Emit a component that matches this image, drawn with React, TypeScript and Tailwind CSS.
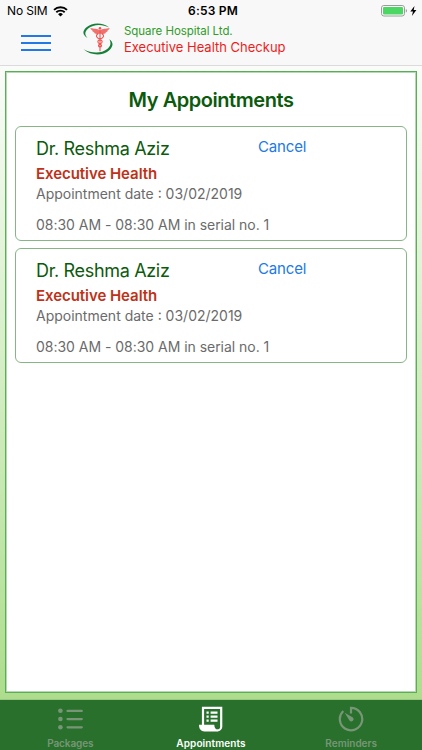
interface Appointment {
  id: number;
  doctor: string;
  department: string;
  date: string;
  time: string;
  serial: number;
}

const appointments: Appointment[] = [
  {
    id: 1,
    doctor: "Dr. Reshma Aziz",
    department: "Executive Health",
    date: "03/02/2019",
    time: "08:30 AM - 08:30 AM",
    serial: 1,
  },
  {
    id: 2,
    doctor: "Dr. Reshma Aziz",
    department: "Executive Health",
    date: "03/02/2019",
    time: "08:30 AM - 08:30 AM",
    serial: 1,
  },
];

function WifiIcon() {
  return (
    <svg width="15" height="11" viewBox="0 0 15 11" fill="none" stroke="#000" strokeWidth="1.9">
      <path d="M1 3.900a9.400 9.400 0 0 1 13 0" />
      <path d="M3.300 6.300a6.100 6.100 0 0 1 8.400 0" />
      <path d="M7.500 10.600 5.100 8.200a3.400 3.400 0 0 1 4.800 0z" fill="#000" stroke="none" />
    </svg>
  );
}

function BatteryIcon() {
  return (
    <svg width="36" height="12" viewBox="0 0 36 12">
      <rect x="0.5" y="0.5" width="23" height="10.5" rx="2.4" fill="#fff" stroke="#9b9b9b" />
      <rect x="2" y="2" width="20" height="7.5" rx="1" fill="#4cd663" />
      <path d="M24.800 4v3.600c.8-.3 1.200-1 1.200-1.800s-.4-1.500-1.200-1.800z" fill="#9b9b9b" />
      <path d="M33.500 1 29.300 6.600H32L30.900 11l4.500-5.900h-2.700z" fill="#000" />
    </svg>
  );
}

function Logo() {
  return (
    <svg width="32" height="34" viewBox="0 0 32 34">
      <path d="M26.300 5.500C20 0 9 .2 3.500 5.200-.8 9-.8 13 4.500 16 1.200 12.500 1.800 9.400 5.200 6.400 10.300 2.200 19 1.700 26.300 5.500z" fill="#16803a" />
      <path d="M.5 27.300c7.500 6.700 19.500 6.600 25.500 1.200 4.800-4.300 4.500-8.500.2-11.300 2.300 3.700 1.500 6.900-2 9.800-5.700 4.700-15.200 4.700-23.700.3z" fill="#16803a" />
      <path d="M17 8.500c-3-2.300-5.700-1.300-9.700-2.400.5 1.500 1.600 2.200 2.900 2.500-.6.100-1 .1-1.400 0 .8 1.200 1.900 1.700 3.100 1.900-.5.200-.8.200-1.200.1.900 1.200 2.700 1.700 5.400 1.100h1.800c2.700.6 4.500.1 5.400-1.100-.4.100-.7.100-1.200-.1 1.200-.2 2.300-.7 3.100-1.900-.4.100-.8.100-1.400 0 1.300-.3 2.400-1 2.900-2.500-4 1.100-6.700.1-9.700 2.400z" fill="#f0706c" />
      <circle cx="17" cy="6.200" r="1.300" fill="#ee5450" />
      <path d="M17 7.500v21.700M15.200 11.500c-2.900 1.800-2.400 4.200 1.800 5.800 2.900 1.300 2.900 3.500 0 4.600-2.200.9-2.100 2.700.3 3.600M18.800 11.500c2.900 1.800 2.400 4.200-1.800 5.800-2.900 1.300-2.900 3.500 0 4.600 2.200.9 2.100 2.700-.3 3.600" fill="none" stroke="#ee5450" strokeWidth="1.100" />
    </svg>
  );
}

function ListIcon() {
  return (
    <svg width="26" height="22" viewBox="0 0 26 22" fill="currentColor">
      <circle cx="3.400" cy="2.800" r="2.300" />
      <circle cx="3.400" cy="11" r="2.300" />
      <circle cx="3.400" cy="19.200" r="2.300" />
      <path d="M10.500 2.900h14.300M10.500 11.100h14.300M10.500 19.300h14.300" stroke="currentColor" strokeWidth="2.200" strokeLinecap="round" />
    </svg>
  );
}

function ScrollIcon() {
  return (
    <svg width="26" height="26" viewBox="0 0 26 26" fill="none" stroke="currentColor">
      <path d="M5 19V1.800h18.200V20.700a3.800 3.800 0 0 1-3.800 3.700" strokeWidth="2.200" />
      <path d="M1 18.800h15.300c0 3.300 1.300 4.600 3.500 4.700v1.900H6.500c-3.700 0-5.500-2.500-5.500-6.600z" fill="currentColor" stroke="none" />
      <path d="M8.500 6.700h2.200M8.500 10.700h2.200M8.500 14.700h2.200M12.600 6.700h6.900M12.600 10.700h6.900M12.600 14.700h6.900" strokeWidth="2.200" />
    </svg>
  );
}

function TimerIcon() {
  return (
    <svg width="26" height="26" viewBox="0 0 26 26" fill="none" stroke="currentColor">
      <path d="M5.300 5A11.200 11.200 0 1 0 13 1.900v5.600" strokeWidth="2.200" />
      <path d="M6.700 6.700 14.900 11.400a2.300 2.300 0 1 1-3.300 3.300z" fill="currentColor" stroke="none" />
    </svg>
  );
}

function AppointmentCard({ appointment }: { appointment: Appointment }) {
  return (
    <div className="h-[115px] rounded-md border border-[#86b586] pl-5 pt-[9px] text-sm text-[#6b6b6b]">
      <div className="flex">
        <h2 className="w-[222px] pt-px text-lg leading-6 tracking-[-0.33px] text-[#0c5a0c]">
          {appointment.doctor}
        </h2>
        <button className="mt-px h-5 text-[15px] leading-5 tracking-[-0.15px] text-[#2279e6]">Cancel</button>
      </div>
      <p className="mt-[3px] text-[15px] font-semibold leading-5 tracking-[-0.05px] text-[#bd3218]">
        {appointment.department}
      </p>
      <p className="leading-5">Appointment date : {appointment.date}</p>
      <p className="mt-[11px] leading-5 tracking-[-0.03px]">
        {appointment.time} in serial no. {appointment.serial}
      </p>
    </div>
  );
}

export default function App() {
  return (
    <div className="flex h-[750px] w-[422px] flex-col overflow-hidden bg-[#f8f8f8] font-['Inter',sans-serif]">
      <header className="h-[66px] border-b border-[#dcdadb]">
        <div className="grid h-[22px] grid-cols-3 items-center pl-[7px] pr-[5px] text-black">
          <div className="flex items-center gap-[6px] text-[12px]">
            <span className="tracking-[-0.15px]">No SIM</span>
            <WifiIcon />
          </div>
          <span className="pl-[2px] text-center text-[12px] font-semibold tracking-[0.2px]">6:53 PM</span>
          <div className="flex justify-end">
            <BatteryIcon />
          </div>
        </div>
        <div className="flex pl-[21px]">
          <button className="mt-[13px] flex h-4 w-[30px] flex-col justify-between">
            <span className="h-[2px] w-full bg-[#2279e6]" />
            <span className="h-[2px] w-full bg-[#2279e6]" />
            <span className="h-[2px] w-full bg-[#2279e6]" />
          </button>
          <div className="ml-8">
            <Logo />
          </div>
          <div className="ml-[9px] mt-[1px]">
            <p className="text-[11.5px] leading-4 tracking-[-0.05px] text-[#319b2b]">Square Hospital Ltd.</p>
            <p className="text-[13px] leading-4 text-[#ee1d1d]">Executive Health Checkup</p>
          </div>
        </div>
      </header>

      <main className="flex-1 border-b border-[#9cc886] bg-gradient-to-b from-[#fafcf9] to-[#addd8c] px-[5px] pt-[5px]">
        <section className="h-[622px] border border-[#5dac5a] bg-white px-[9px] shadow-[inset_0_0_0_1px_#b4dab1]">
          <h1 className="mb-3 mt-[14px] text-center text-xl font-semibold leading-7 tracking-[-0.45px] text-[#0c5a0c]">
            My Appointments
          </h1>
          <div className="flex flex-col gap-[7px]">
            {appointments.map((appointment) => (
              <AppointmentCard key={appointment.id} appointment={appointment} />
            ))}
          </div>
        </section>
      </main>

      <nav className="grid h-[50px] grid-cols-3 bg-[#28702c] pt-[6px] text-[10px] font-semibold text-[#789677]">
        <div className="flex flex-col items-center">
          <div className="flex h-[26px] items-center">
            <ListIcon />
          </div>
          <span className="mt-1 leading-[14px] tracking-[-0.1px]">Packages</span>
        </div>
        <div className="flex flex-col items-center text-white">
          <ScrollIcon />
          <span className="mt-1 leading-[14px] tracking-[0.1px]">Appointments</span>
        </div>
        <div className="flex flex-col items-center pr-px">
          <TimerIcon />
          <span className="mt-1 leading-[14px]">Reminders</span>
        </div>
      </nav>
    </div>
  );
}
